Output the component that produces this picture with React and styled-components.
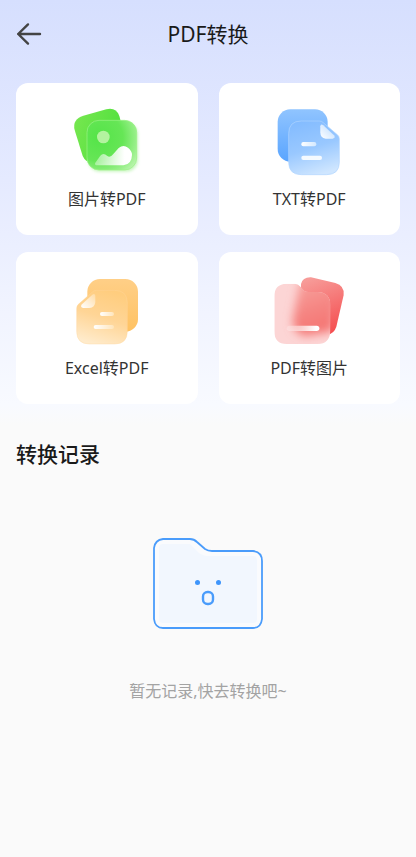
import React from 'react'
import styled, { createGlobalStyle } from "styled-components"

function ImageIcon() {
    return (
        <CardIcon viewBox="6 0 270 240" aria-hidden="true">
            <defs>
                <linearGradient id="imgBack" x1="0" y1="0" x2="1" y2="0.3">
                    <stop offset="0" stopColor="#78e750" />
                    <stop offset="1" stopColor="#4ee03c" />
                </linearGradient>
                <radialGradient id="imgFront" cx="0.25" cy="0.35" r="0.95">
                    <stop offset="0" stopColor="#54e448" />
                    <stop offset="0.5" stopColor="#66e656" />
                    <stop offset="0.8" stopColor="#9bf08c" />
                    <stop offset="1" stopColor="#c8f6bd" />
                </radialGradient>
                <linearGradient id="imgHill" x1="0" y1="0" x2="1" y2="0">
                    <stop offset="0" stopColor="#fff" stopOpacity="0.4" />
                    <stop offset="0.8" stopColor="#fff" />
                </linearGradient>
                <filter id="imgGlow" x="-20%" y="-20%" width="140%" height="140%">
                    <feGaussianBlur stdDeviation="5" />
                </filter>
            </defs>
            <rect x="84" y="68" width="150" height="147" rx="36" fill="#c9f6c0" filter="url(#imgGlow)" />
            <path d="M70 47L139 28Q168 21 178 48L208 160Q210 177 192 182L96 188Q76 186 68 168L44 90Q36 58 70 47Z" fill="url(#imgBack)" />
            <rect x="81" y="61" width="149" height="149" rx="36" fill="url(#imgFront)" stroke="#9af284" strokeWidth="3" strokeOpacity="0.7" />
            <circle cx="130" cy="111" r="19" fill="#b3f39f" />
            <path d="M106 188L121 167Q130 156 142 168Q151 174 160 162L176 144Q190 132 204 143Q217 154 216 165Q215 194 190 196L112 196Q102 195 106 188Z" fill="url(#imgHill)" />
        </CardIcon>
    )
}

function TextIcon() {
    return (
        <CardIcon viewBox="-1 0 270 240" aria-hidden="true">
            <defs>
                <linearGradient id="txtBack" x1="0" y1="0" x2="0" y2="1">
                    <stop offset="0" stopColor="#90c4ff" />
                    <stop offset="1" stopColor="#5aa5ff" />
                </linearGradient>
                <linearGradient id="txtFront" x1="0.3" y1="0" x2="0.6" y2="1">
                    <stop offset="0" stopColor="#84bcff" />
                    <stop offset="0.5" stopColor="#99c8ff" />
                    <stop offset="1" stopColor="#cfe6ff" />
                </linearGradient>
                <linearGradient id="txtFold" x1="0" y1="1" x2="1" y2="0">
                    <stop offset="0" stopColor="#fff" />
                    <stop offset="1" stopColor="#b8d9ff" />
                </linearGradient>
                <linearGradient id="txtLine" x1="0" y1="0" x2="1" y2="0">
                    <stop offset="0" stopColor="#fff" />
                    <stop offset="1" stopColor="#d3e8ff" />
                </linearGradient>
            </defs>
            <rect x="40" y="28" width="150" height="157" rx="38" fill="url(#txtBack)" />
            <path d="M111 63L165 63Q172 63 177 68L220 105Q225 109 225 117L225 186Q225 224 187 224L111 224Q73 224 73 186L73 101Q73 63 111 63Z" fill="url(#txtFront)" stroke="#b1d5ff" strokeWidth="2" />
            <path d="M168 79Q169 70 177 76L209 106Q215 114 205 116L184 116Q168 115 168 97Z" fill="url(#txtFold)" />
            <rect x="111" y="126" width="45" height="13" rx="6" fill="url(#txtLine)" />
            <rect x="111" y="167" width="62" height="13" rx="6" fill="#f5faff" />
        </CardIcon>
    )
}

function ExcelIcon() {
    return (
        <CardIcon viewBox="5 3 270 240" aria-hidden="true">
            <defs>
                <linearGradient id="xlsBack" x1="0" y1="0" x2="0" y2="1">
                    <stop offset="0" stopColor="#ffcf87" />
                    <stop offset="1" stopColor="#ffc262" />
                </linearGradient>
                <linearGradient id="xlsFront" x1="0.65" y1="0" x2="0.35" y2="1">
                    <stop offset="0" stopColor="#ffcd7e" />
                    <stop offset="0.5" stopColor="#ffd596" />
                    <stop offset="1" stopColor="#ffebcb" />
                </linearGradient>
                <linearGradient id="xlsFold" x1="0" y1="1" x2="1" y2="0">
                    <stop offset="0" stopColor="#fff" />
                    <stop offset="1" stopColor="#ffdca5" />
                </linearGradient>
                <linearGradient id="xlsLine" x1="0" y1="0" x2="1" y2="0">
                    <stop offset="0" stopColor="#fff" />
                    <stop offset="1" stopColor="#ffe5bb" />
                </linearGradient>
            </defs>
            <rect x="81" y="33" width="152" height="158" rx="38" fill="url(#xlsBack)" />
            <path d="M108 67L163 67Q201 67 201 105L201 190Q201 228 163 228L87 228Q49 228 49 190L49 121Q49 114 54 109L96 72Q101 67 108 67Z" fill="url(#xlsFront)" stroke="#ffd79c" strokeWidth="2" strokeOpacity="0.6" />
            <path d="M65 109L96 80Q104 74 105 84L105 101Q104 119 87 120L69 120Q58 118 65 109Z" fill="url(#xlsFold)" />
            <rect x="119" y="132" width="42" height="12" rx="6" fill="url(#xlsLine)" />
            <rect x="100" y="171" width="61" height="12" rx="6" fill="url(#xlsLine)" />
        </CardIcon>
    )
}

function PdfIcon() {
    return (
        <CardIcon viewBox="-1 3 270 240" aria-hidden="true">
            <defs>
                <linearGradient id="pdfBack" x1="0.3" y1="0" x2="0.6" y2="1">
                    <stop offset="0" stopColor="#f79b98" />
                    <stop offset="1" stopColor="#f54e50" />
                </linearGradient>
                <linearGradient id="pdfFront" x1="0.4" y1="0" x2="0.7" y2="1">
                    <stop offset="0" stopColor="#f7a09c" />
                    <stop offset="0.5" stopColor="#f58582" />
                    <stop offset="1" stopColor="#f4706e" />
                </linearGradient>
                <linearGradient id="pdfLine" x1="0" y1="0" x2="1" y2="0">
                    <stop offset="0" stopColor="#fff" stopOpacity="0.2" />
                    <stop offset="0.9" stopColor="#fff" />
                </linearGradient>
                <clipPath id="pdfShape">
                    <path d="M67 47L92 47Q102 48 109 57L119 68Q124 72 132 72L160 72Q198 74 198 111L198 190Q196 228 160 228L67 228Q30 228 30 190L30 85Q30 48 67 47Z" />
                </clipPath>
                <filter id="pdfBlur" x="-50%" y="-50%" width="200%" height="200%">
                    <feGaussianBlur stdDeviation="15" />
                </filter>
            </defs>
            <path d="M110 48Q115 27 140 28L213 45Q241 53 238 81L216 176Q209 198 188 200L110 170Z" fill="url(#pdfBack)" />
            <g clipPath="url(#pdfShape)">
                <rect x="25" y="40" width="180" height="195" fill="#fcd5d5" />
                <path d="M108 35L225 55L205 190L120 204Q80 190 86 150Z" fill="url(#pdfFront)" filter="url(#pdfBlur)" />
            </g>
            <rect x="67" y="173" width="98" height="16" rx="8" fill="url(#pdfLine)" />
        </CardIcon>
    )
}

const tools = [
    { name: '图片转PDF', Icon: ImageIcon },
    { name: 'TXT转PDF', Icon: TextIcon },
    { name: 'Excel转PDF', Icon: ExcelIcon },
    { name: 'PDF转图片', Icon: PdfIcon },
]

function App() {
    return (
        <Container>
            <GlobalStyle />
            <Header>
                <BackButton aria-label="返回">
                    <svg width="26" height="24" viewBox="0 0 26 24" fill="none" stroke="#444" strokeWidth="2.4" strokeLinecap="round" strokeLinejoin="round">
                        <path d="M24 12H2.2M12 2.4L2.2 12L12 21.6" />
                    </svg>
                </BackButton>
                <Title>PDF转换</Title>
            </Header>
            <Tools>
                {tools.map(({ name, Icon }) => (
                    <Card key={name}>
                        <Icon />
                        <span>{name}</span>
                    </Card>
                ))}
            </Tools>
            <Records>
                <SectionTitle>转换记录</SectionTitle>
                <Empty>
                    <svg width="112" height="94" viewBox="0 0 112 94" fill="none" aria-hidden="true">
                        <path d="M11 2H38Q42 2 45 5L53 12Q56 14 60 14H101Q110 15 110 24V82Q109 91 101 91H11Q3 91 2 82V11Q3 3 11 2Z" fill="#fafbfd" stroke="#4a9cfb" strokeWidth="1.8" />
                        <path d="M11 7H38L47 16Q50 18 54 19H101Q105 19 105 24V82Q105 86 101 86H11Q7 86 7 82V11Q7 7 11 7Z" fill="#f2f7fe" />
                        <circle cx="45.5" cy="45.5" r="2.5" fill="#3e95fb" />
                        <circle cx="66.5" cy="45.5" r="2.5" fill="#3e95fb" />
                        <rect x="51" y="55" width="10" height="12" rx="4.5" stroke="#4a9cfb" strokeWidth="2.4" />
                    </svg>
                    <EmptyText>暂无记录,快去转换吧~</EmptyText>
                </Empty>
            </Records>
        </Container>
    )
}

export default App

const GlobalStyle = createGlobalStyle`
    * {
        box-sizing: border-box;
    }

    body {
        margin: 0;
        background: #fafafa;
        font-family: "Noto Sans", "Noto Sans CJK SC", sans-serif;
    }
`

const Container = styled.main`
    min-height: 100vh;
    background: #fafafa linear-gradient(#d6dffe, #e5eaff 180px, #f0f3ff 300px, #f8faff 405px, #fafafa 425px);
`

const Header = styled.header`
    display: grid;
    grid-template-columns: 26px 1fr 26px;
    align-items: center;
    height: 68px;
    padding: 0 16px;
`

const BackButton = styled.button`
    display: flex;
    padding: 0;
    border: none;
    background: none;
    cursor: pointer;
`

const Title = styled.h1`
    margin: 0;
    font-size: 21px;
    line-height: 32px;
    font-weight: 400;
    text-align: center;
    color: #1a1a1a;
`

const Tools = styled.section`
    display: grid;
    grid-template-columns: 1fr 1fr;
    gap: 17px 21px;
    padding: 15px 16px 0;
`

const Card = styled.button`
    display: flex;
    flex-direction: column;
    align-items: center;
    gap: 7px;
    padding: 17px 0 24px;
    border: none;
    border-radius: 12px;
    background: #fff;
    font-family: inherit;
    font-size: 16px;
    line-height: 24px;
    color: #333;
    cursor: pointer;
`

const CardIcon = styled.svg`
    width: 90px;
    height: 80px;
`

const Records = styled.section`
    padding: 34px 16px;
`

const SectionTitle = styled.h2`
    margin: 0;
    font-size: 21px;
    line-height: 32px;
    font-weight: 500;
    color: #1a1a1a;
`

const Empty = styled.div`
    display: flex;
    flex-direction: column;
    align-items: center;
    gap: 48px;
    padding-top: 67px;
`

const EmptyText = styled.p`
    margin: 0;
    font-size: 16px;
    line-height: 24px;
    color: #a3a3a3;
`
